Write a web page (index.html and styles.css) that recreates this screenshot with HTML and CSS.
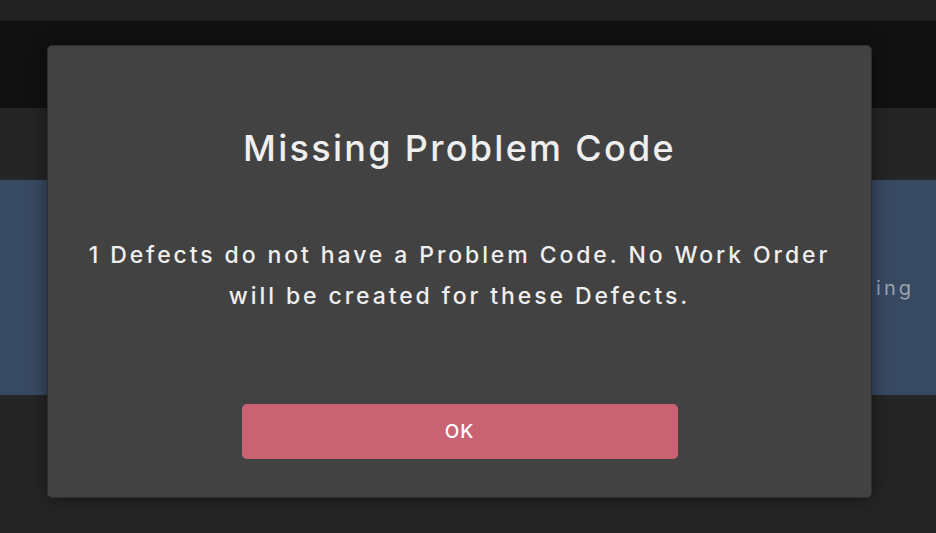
FILE: index.html
```html
<!DOCTYPE html>
<html lang="en">
<head>
  <meta charset="UTF-8">
  <title>Missing Problem Code</title>
  <meta name="viewport" content="width=device-width, initial-scale=1.0" />
  <link rel="stylesheet" href="styles.css">
</head>
<body>

  <div class="page">
    <div class="top-bar"></div>
    <div class="header-band"></div>
    <div class="toolbar"></div>
    <div class="defect-row">
      <span class="row-label">Pending</span>
    </div>
    <div class="page-rest"></div>
  </div>

  <div class="overlay">
    <div class="modal">
      <h2>Missing Problem Code</h2>
      <p class="modal-text">1 Defects do not have a Problem Code. No Work Order will be created for these Defects.</p>
      <button class="ok-btn">OK</button>
    </div>
  </div>

</body>
</html>
```

FILE: styles.css
```css
:root {
  --bg-dark: #111111;
  --bg-mid: #252525;
  --row-blue: #384962;
  --modal-bg: #424242;
  --accent: #c96374;
  --text: #efefef;
  --font-main: 'Inter', 'Noto Sans', sans-serif;
}

html, body {
  margin: 0;
  height: 100%;
  overflow: hidden;
}

body {
  font-family: var(--font-main);
  background: var(--bg-mid);
  position: relative;
}

.page {
  display: flex;
  flex-direction: column;
  height: 100%;
}

.top-bar {
  height: 20px;
  background: #222222;
  border-bottom: 1px solid #1a1a1a;
}

.header-band {
  height: 87px;
  background: var(--bg-dark);
}

.toolbar {
  height: 72px;
  background: var(--bg-mid);
}

.defect-row {
  height: 215px;
  background: var(--row-blue);
  display: flex;
  align-items: center;
  justify-content: flex-end;
  padding-right: 22px;
}

.row-label {
  color: #9ba3ad;
  font-size: 20px;
  letter-spacing: 3px;
}

.page-rest {
  flex: 1;
  background: var(--bg-mid);
}

.overlay {
  position: absolute;
  inset: 0;
  padding: 45px 0 0 47px;
}

.modal {
  width: 823px;
  height: 369px;
  background: var(--modal-bg);
  border: 1px solid #2e2e2e;
  border-radius: 5px;
  box-shadow: 0 0 18px rgba(0, 0, 0, 0.45);
  display: flex;
  flex-direction: column;
  align-items: center;
  padding-top: 82px;
}

.modal h2 {
  margin: 0;
  color: var(--text);
  font-size: 36px;
  line-height: 40px;
  font-weight: 500;
  letter-spacing: 2.3px;
}

.modal-text {
  margin: 67px 0 0;
  max-width: 780px;
  text-align: center;
  color: var(--text);
  font-size: 23px;
  line-height: 41px;
  font-weight: 500;
  letter-spacing: 2.9px;
}

.ok-btn {
  margin-top: 87px;
  width: 436px;
  height: 55px;
  background: var(--accent);
  color: #ffffff;
  border: none;
  border-radius: 5px;
  font-family: var(--font-main);
  font-size: 19px;
  font-weight: 500;
  letter-spacing: 1px;
}
```
